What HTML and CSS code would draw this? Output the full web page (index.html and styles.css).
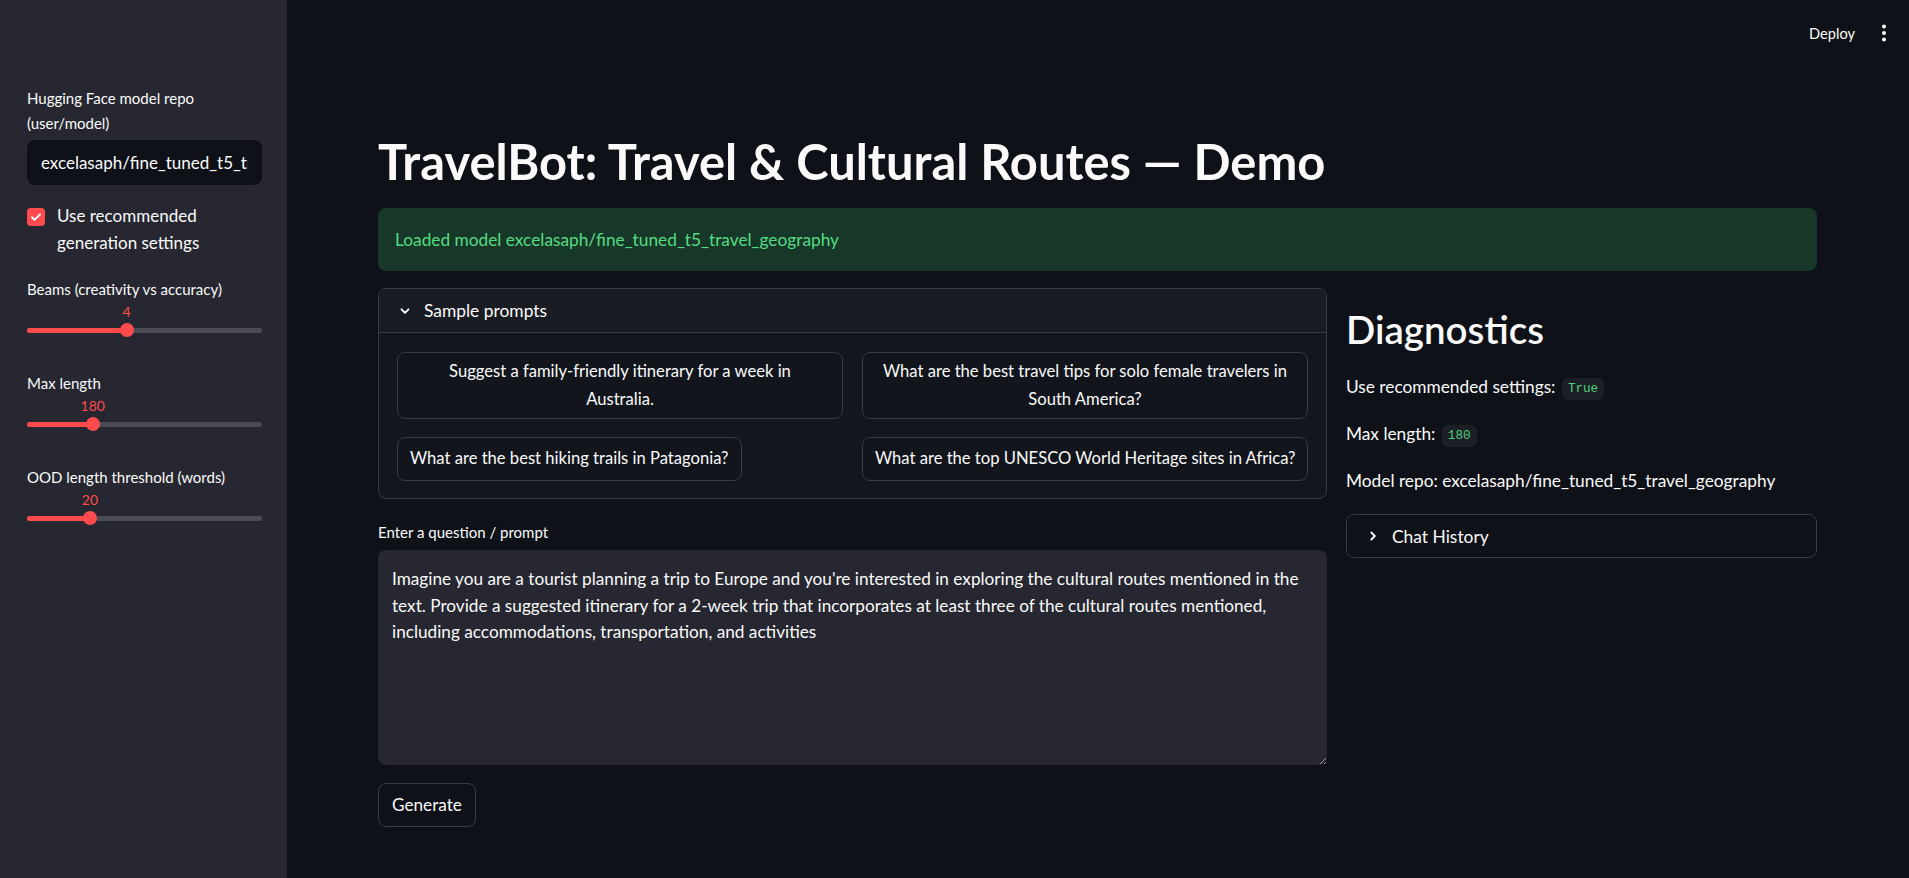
FILE: index.html
```html
<!DOCTYPE html>
<html lang="en">
<head>
<meta charset="utf-8">
<title>TravelBot</title>
<link rel="stylesheet" href="styles.css">
</head>
<body>
<div class="app">
  <aside class="sidebar">
    <div class="sb-label">Hugging Face model repo (user/model)</div>
    <input class="sb-input" type="text" value="excelasaph/fine_tuned_t5_travel_geography">

    <label class="checkbox">
      <span class="check-box">
        <svg width="12" height="12" viewBox="0 0 12 12"><path d="M2 6.3l2.6 2.6L10 3.4" fill="none" stroke="#fff" stroke-width="2" stroke-linecap="round" stroke-linejoin="round"/></svg>
      </span>
      <span class="check-text">Use recommended generation settings</span>
    </label>

    <div class="slider first">
      <div class="sb-label">Beams (creativity vs accuracy)</div>
      <div class="slider-area" style="--p: 42.4%">
        <span class="slider-value">4</span>
        <div class="track"><div class="fill"></div></div>
        <span class="thumb"></span>
      </div>
    </div>

    <div class="slider">
      <div class="sb-label">Max length</div>
      <div class="slider-area" style="--p: 28%">
        <span class="slider-value">180</span>
        <div class="track"><div class="fill"></div></div>
        <span class="thumb"></span>
      </div>
    </div>

    <div class="slider">
      <div class="sb-label">OOD length threshold (words)</div>
      <div class="slider-area" style="--p: 26.8%">
        <span class="slider-value">20</span>
        <div class="track"><div class="fill"></div></div>
        <span class="thumb"></span>
      </div>
    </div>
  </aside>

  <main class="main">
    <header class="toolbar">
      <span class="deploy">Deploy</span>
      <svg class="dots" width="8" height="20" viewBox="0 0 8 20"><circle cx="4" cy="3.5" r="2"/><circle cx="4" cy="10" r="2"/><circle cx="4" cy="16.5" r="2"/></svg>
    </header>

    <div class="content">
      <h1 class="title">TravelBot: Travel &amp; Cultural Routes — Demo</h1>
      <div class="alert">Loaded model excelasaph/fine_tuned_t5_travel_geography</div>

      <div class="columns">
        <div class="col-left">
          <div class="expander">
            <div class="exp-header open">
              <svg class="chev" width="12" height="12" viewBox="0 0 12 12"><path d="M2.5 4.3L6 7.8l3.5-3.5" fill="none" stroke="#fafafa" stroke-width="1.9" stroke-linecap="round" stroke-linejoin="round"/></svg>
              <span>Sample prompts</span>
            </div>
            <div class="prompt-grid">
              <button class="btn prompt full">Suggest a family-friendly itinerary for a week in<br>Australia.</button>
              <button class="btn prompt full">What are the best travel tips for solo female travelers in<br>South America?</button>
              <button class="btn prompt">What are the best hiking trails in Patagonia?</button>
              <button class="btn prompt">What are the top UNESCO World Heritage sites in Africa?</button>
            </div>
          </div>

          <div class="field-label">Enter a question / prompt</div>
          <textarea class="prompt-area">Imagine you are a tourist planning a trip to Europe and you're interested in exploring the cultural routes mentioned in the
text. Provide a suggested itinerary for a 2-week trip that incorporates at least three of the cultural routes mentioned,
including accommodations, transportation, and activities</textarea>

          <button class="btn generate">Generate</button>
        </div>

        <div class="col-right">
          <h2 class="diag-title">Diagnostics</h2>
          <p class="diag">Use recommended settings: <code>True</code></p>
          <p class="diag">Max length: <code>180</code></p>
          <p class="diag">Model repo: excelasaph/fine_tuned_t5_travel_geography</p>
          <div class="expander closed">
            <div class="exp-header">
              <svg class="chev" width="12" height="12" viewBox="0 0 12 12"><path d="M4.3 2.5L7.8 6 4.3 9.5" fill="none" stroke="#fafafa" stroke-width="1.9" stroke-linecap="round" stroke-linejoin="round"/></svg>
              <span>Chat History</span>
            </div>
          </div>
        </div>
      </div>
    </div>
  </main>
</div>
</body>
</html>
```

FILE: styles.css
```css
* { box-sizing: border-box; }

html, body {
  margin: 0;
  padding: 0;
  height: 100%;
}

body {
  background: #0e1117;
  color: #fafafa;
  font-family: Lato, "Noto Sans", sans-serif;
  font-size: 17.3px;
  overflow: hidden;
}

.app {
  display: flex;
  height: 100vh;
}

/* ---------- Sidebar ---------- */
.sidebar {
  width: 287px;
  flex: none;
  background: #262730;
  padding: 86px 25px 0 27px;
}

.sb-label {
  font-size: 15px;
  line-height: 24.5px;
  color: #fafafa;
}

.sb-input {
  display: block;
  width: 100%;
  height: 45px;
  margin-top: 5px;
  padding: 0 14px;
  border: none;
  border-radius: 8px;
  background: #0f1118;
  color: #fafafa;
  font-family: inherit;
  font-size: 17px;
  outline: none;
}

.checkbox {
  display: flex;
  align-items: flex-start;
  gap: 12px;
  margin-top: 18px;
}

.check-box {
  flex: none;
  width: 18px;
  height: 18px;
  margin-top: 5px;
  border-radius: 4px;
  background: #ff4b4b;
  display: flex;
  align-items: center;
  justify-content: center;
}

.check-text {
  font-size: 17px;
  line-height: 26.5px;
}

.slider { margin-top: 33.5px; }
.slider.first { margin-top: 21px; }

.slider-area {
  position: relative;
  height: 36px;
}

.slider-value {
  position: absolute;
  top: 0;
  left: var(--p);
  transform: translateX(-50%);
  font-size: 14px;
  line-height: 20px;
  color: #ff4b4b;
}

.track {
  position: absolute;
  top: 26px;
  left: 0;
  right: 0;
  height: 5px;
  border-radius: 3px;
  background: #4a4b55;
  overflow: hidden;
}

.fill {
  width: var(--p);
  height: 100%;
  background: #ff4b4b;
}

.thumb {
  position: absolute;
  top: 21.5px;
  left: var(--p);
  width: 14px;
  height: 14px;
  margin-left: -7px;
  border-radius: 50%;
  background: #ff4b4b;
}

/* ---------- Main ---------- */
.main {
  flex: 1;
  min-width: 0;
  display: flex;
  flex-direction: column;
}

.toolbar {
  height: 66px;
  display: flex;
  align-items: center;
  justify-content: flex-end;
  gap: 25px;
  padding-right: 21px;
}

.deploy {
  font-size: 14.6px;
  color: #fafafa;
}

.dots { fill: #fafafa; }

.content {
  padding: 65.5px 92px 0 91px;
}

.title {
  margin: 0 0 17.5px;
  font-size: 48.8px;
  line-height: 59px;
  font-weight: 700;
}

.alert {
  height: 63px;
  display: flex;
  align-items: center;
  padding: 0 17px;
  border-radius: 8px;
  background: #173828;
  color: #55dc82;
}

.columns {
  margin-top: 17px;
  display: grid;
  grid-template-columns: 949px minmax(0, 1fr);
  column-gap: 19px;
  align-items: start;
}

/* Expander */
.expander {
  border: 1px solid #3a3c44;
  border-radius: 8px;
  overflow: hidden;
  background: #13161d;
}

.exp-header {
  height: 44px;
  display: flex;
  align-items: center;
  gap: 13px;
  padding-left: 20px;
  background: #1a1c24;
  font-size: 17.4px;
}

.exp-header.open { border-bottom: 1px solid #3a3c44; }

.expander.closed { background: #0e1117; }
.expander.closed .exp-header { background: #0e1117; height: 42px; }

.prompt-grid {
  display: grid;
  grid-template-columns: minmax(0, 1fr) minmax(0, 1fr);
  column-gap: 19px;
  row-gap: 18px;
  padding: 19px 18px 17px;
  justify-items: start;
}

.btn {
  font-family: inherit;
  font-size: 16.6px;
  color: #fafafa;
  background: #12151c;
  border: 1px solid #3a3c44;
  border-radius: 8px;
  line-height: 27.5px;
  cursor: pointer;
}

.prompt {
  max-width: 100%;
  min-height: 44px;
  padding: 5px 12px;
  text-align: center;
  white-space: nowrap;
}

.prompt.full { width: 100%; }

.field-label {
  margin-top: 21px;
  font-size: 15px;
  line-height: 24px;
}

.prompt-area {
  display: block;
  width: 100%;
  height: 215px;
  margin-top: 6px;
  padding: 16px 14px 13px;
  border: none;
  border-radius: 8px;
  background: #262730;
  color: #fafafa;
  font-family: inherit;
  font-size: 17.2px;
  line-height: 26.5px;
  white-space: pre;
  overflow: hidden;
  resize: vertical;
  outline: none;
}

.generate {
  margin-top: 18px;
  height: 44px;
  padding: 0 13px;
  font-size: 17.2px;
  background: #0e1117;
}

/* Right column */
.diag-title {
  margin: 18px 0 20px;
  font-size: 38.5px;
  line-height: 47px;
  font-weight: 600;
}

.diag {
  margin: 0 0 20px;
  line-height: 27px;
}

.diag code {
  font-family: "Liberation Mono", "DejaVu Sans Mono", monospace;
  font-size: 12.6px;
  line-height: 1;
  color: #4fd27a;
  background: #1c1f26;
  border-radius: 6px;
  padding: 4px 6px;
  margin-left: 2px;
  vertical-align: 1px;
}

.col-right .expander { margin-top: 19px; }
```
